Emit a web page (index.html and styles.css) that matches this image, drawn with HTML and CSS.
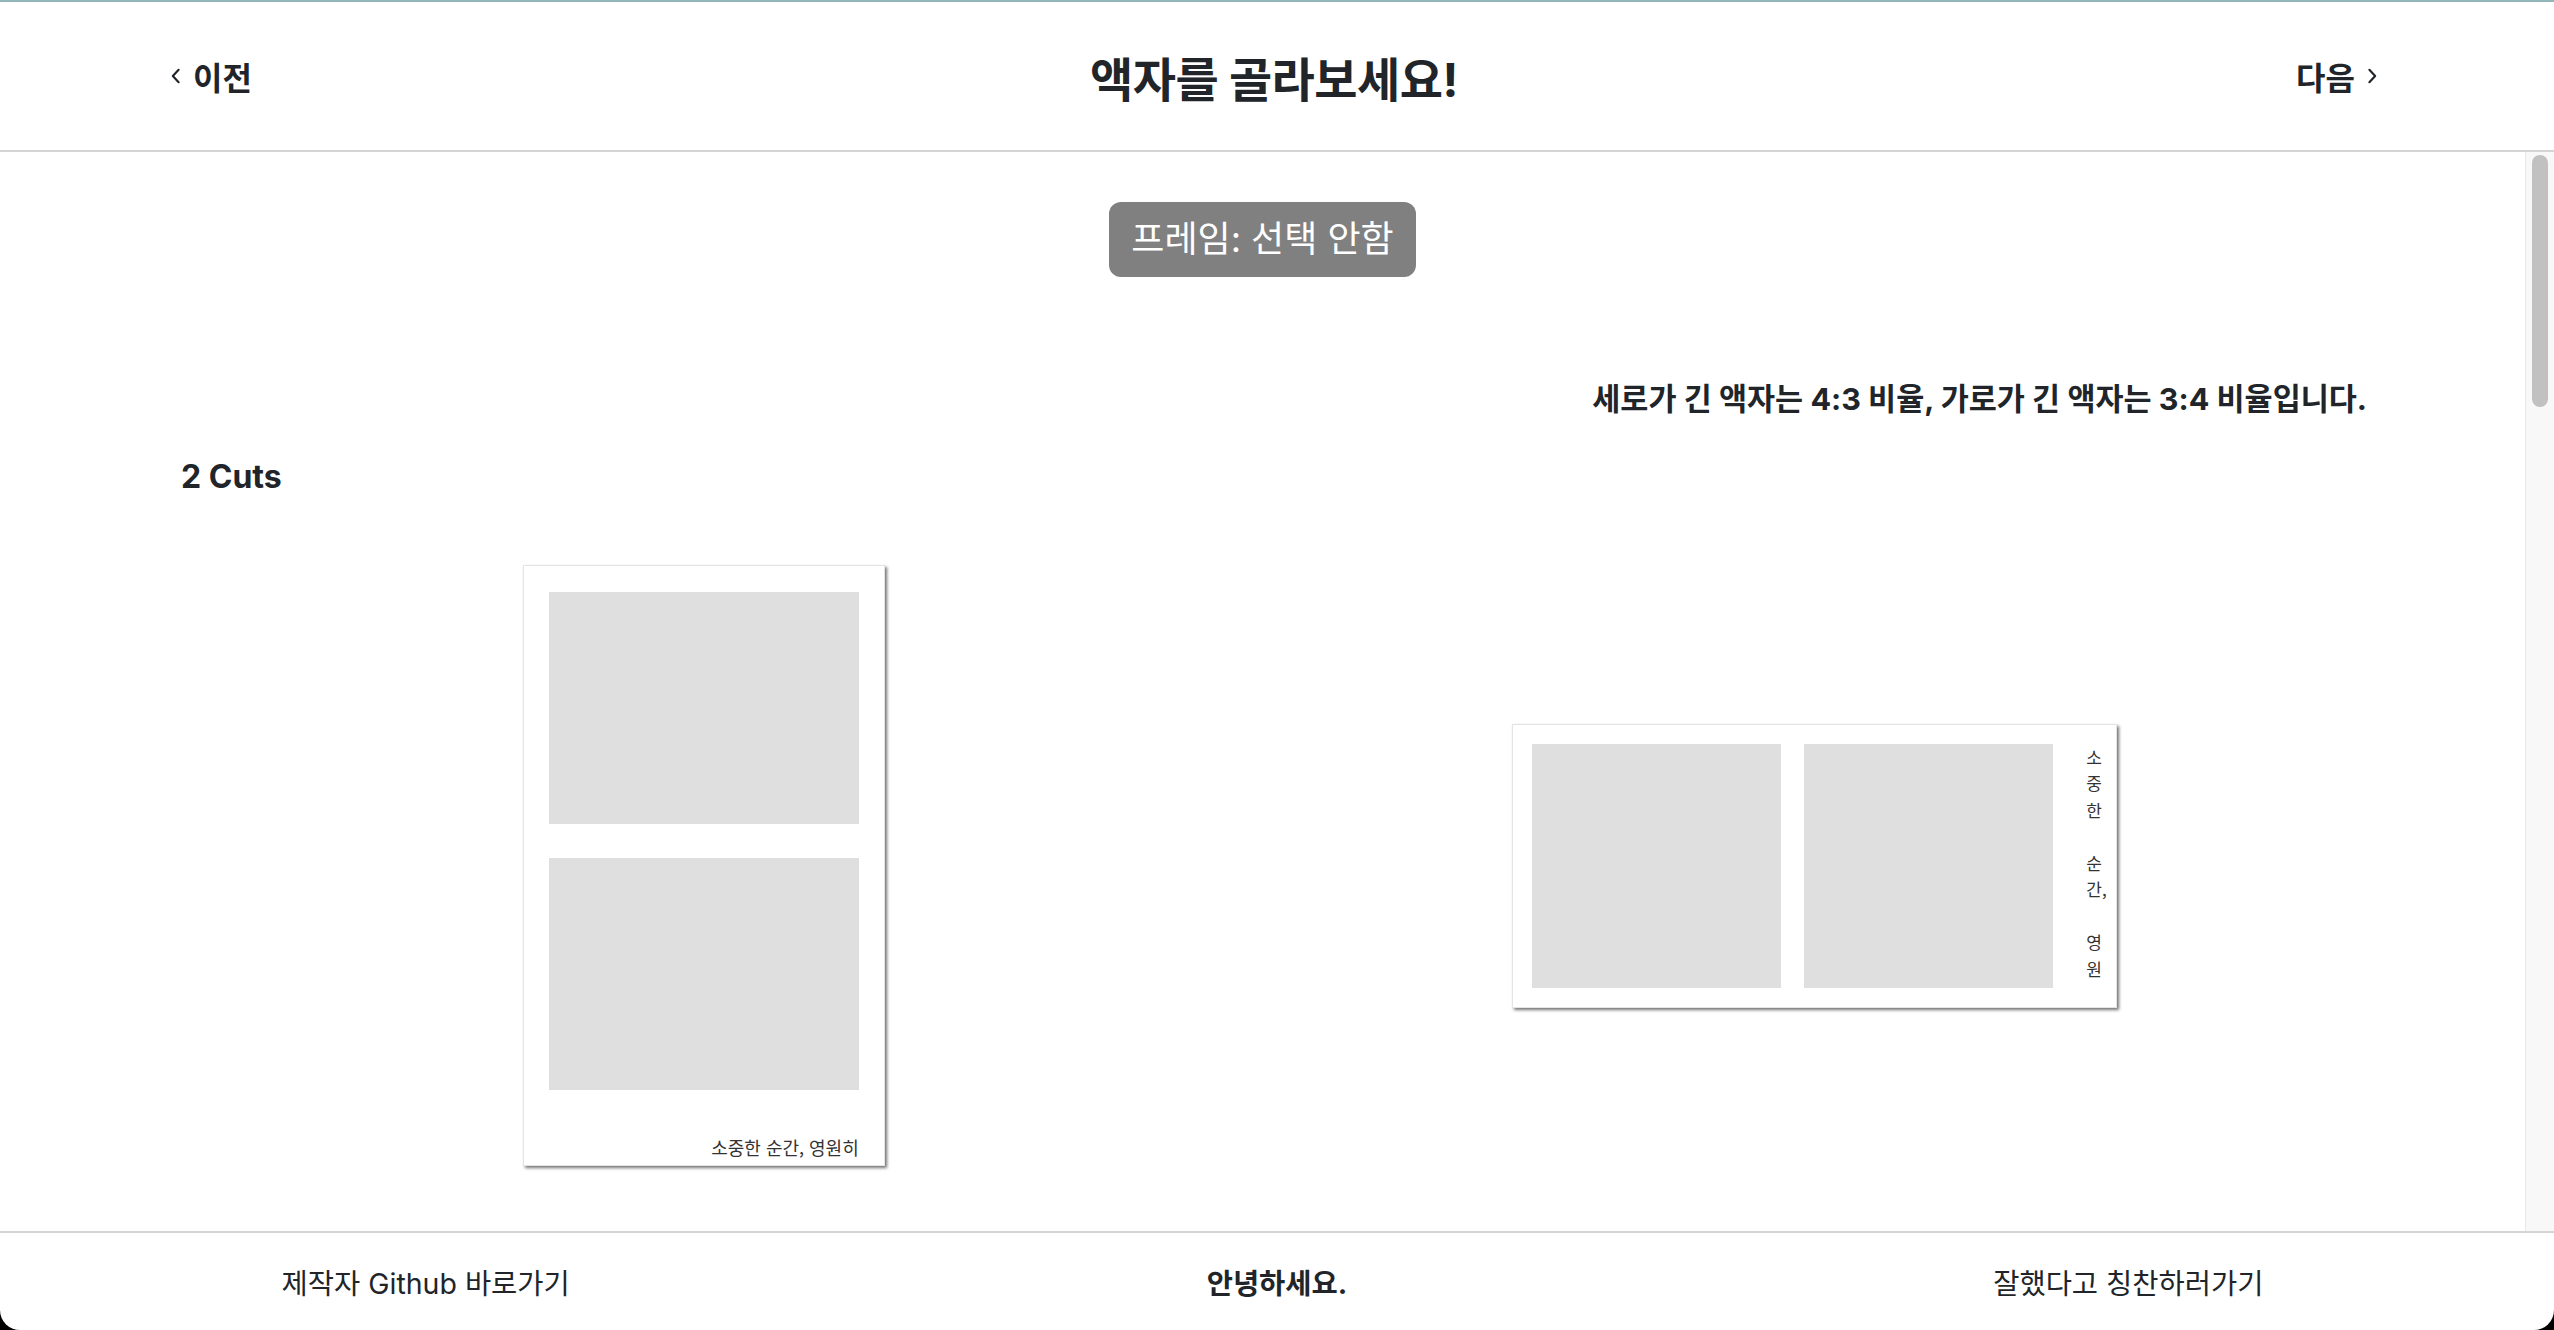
FILE: index.html
```html
<!DOCTYPE html>
<html lang="ko">
<head>
  <meta charset="UTF-8" />
  <meta name="viewport" content="width=device-width, initial-scale=1.0" />
  <title>액자 선택</title>
  <link rel="stylesheet" href="styles.css">
</head>
<body>
  <div class="window">
    <header class="topbar">
      <a class="nav prev" href="#">
        <svg viewBox="0 0 12 18" width="11" height="16"><path d="M9.5 2 L3 9 L9.5 16" /></svg>
        이전
      </a>
      <h1 class="title">액자를 골라보세요!</h1>
      <a class="nav next" href="#">
        다음
        <svg viewBox="0 0 12 18" width="11" height="16"><path d="M2.5 2 L9 9 L2.5 16" /></svg>
      </a>
    </header>

    <div class="body-area">
      <main class="content">
        <div class="badge-row"><span class="badge">프레임: 선택 안함</span></div>
        <p class="note">세로가 긴 액자는 4:3 비율, 가로가 긴 액자는 3:4 비율입니다.</p>

        <section class="cuts">
          <h2>2 Cuts</h2>
          <div class="frame-row">
            <div class="frame portrait">
              <div class="photo"></div>
              <div class="photo"></div>
              <p class="caption">소중한 순간, 영원히</p>
            </div>
            <div class="frame landscape">
              <div class="photo"></div>
              <div class="photo"></div>
              <p class="caption side">소중한 순간, 영원히</p>
            </div>
          </div>
        </section>
      </main>
      <div class="scrollbar"><div class="thumb"></div></div>
    </div>

    <footer class="bottombar">
      <a href="#">제작자 Github 바로가기</a>
      <strong>안녕하세요.</strong>
      <a href="#">잘했다고 칭찬하러가기</a>
    </footer>
  </div>
</body>
</html>
```

FILE: styles.css
```css
html, body {
  margin: 0;
  padding: 0;
  height: 100%;
}

html {
  background: #000;
}

body {
  font-family: Inter, "Noto Sans CJK KR", sans-serif;
  color: #212529;
}

.window {
  height: 100vh;
  box-sizing: border-box;
  display: flex;
  flex-direction: column;
  background: #fff;
  border-top: 2px solid #93b6ba;
  border-radius: 0 0 20px 20px;
  overflow: hidden;
}

/* 상단 바 */
.topbar {
  flex: 0 0 auto;
  height: 148px;
  display: grid;
  grid-template-columns: 1fr auto 1fr;
  align-items: center;
  padding: 0 176px 0 170px;
  border-bottom: 2px solid #d5d5d5;
}

.nav {
  display: flex;
  align-items: center;
  gap: 12px;
  font-size: 32px;
  font-weight: 700;
  color: #212529;
  text-decoration: none;
}

.nav svg {
  fill: none;
  stroke: #212529;
  stroke-width: 2.4;
  stroke-linecap: round;
  stroke-linejoin: round;
}

.nav.next {
  justify-self: end;
}

.title {
  margin: 0;
  font-size: 47px;
  font-weight: 700;
  letter-spacing: -0.5px;
}

/* 본문 */
.body-area {
  flex: 1;
  min-height: 0;
  display: flex;
}

.content {
  flex: 1;
  overflow: hidden;
  padding: 50px 158px 0;
}

.scrollbar {
  flex: 0 0 auto;
  width: 16px;
  padding: 3px 6px 0;
  background: #f8f8f8;
  border-left: 1px solid #e8e8e8;
}

.thumb {
  height: 252px;
  background: #c1c1c1;
  border-radius: 8px;
}

.badge-row {
  text-align: center;
}

.badge {
  display: inline-block;
  background: #808080;
  color: #fff;
  font-size: 36px;
  line-height: 51px;
  padding: 12px 22px;
  border-radius: 12px;
}

.note {
  margin: 102px 0 0;
  text-align: right;
  font-size: 30.5px;
  line-height: 40px;
  font-weight: 700;
}

.cuts h2 {
  margin: 38px 0 0 23px;
  font-size: 32px;
  line-height: 40px;
  font-weight: 700;
}

.frame-row {
  margin-top: 68px;
  display: grid;
  grid-template-columns: 1fr 1fr;
  align-items: center;
  justify-items: center;
}

.frame {
  box-sizing: border-box;
  background: #fff;
  border: 1px solid #e4e4e4;
  box-shadow: 2px 2px 3px rgba(0, 0, 0, 0.55);
}

.photo {
  background: #dfdfdf;
}

.caption {
  margin: 0;
  font-family: "Noto Sans CJK KR", sans-serif;
  font-size: 18px;
  color: #333;
}

/* 세로 액자 */
.frame.portrait {
  width: 362px;
  margin-right: 13px;
  padding: 26px 25px 5px;
  display: flex;
  flex-direction: column;
  gap: 34px;
}

.frame.portrait .photo {
  height: 232px;
}

.frame.portrait .caption {
  margin-top: 10px;
  line-height: 26px;
  text-align: right;
}

/* 가로 액자 */
.frame.landscape {
  display: flex;
  align-items: flex-start;
  padding: 19px 7px 19px 19px;
  gap: 23px;
}

.frame.landscape .photo {
  width: 249px;
  height: 244px;
}

.caption.side {
  width: 23px;
  height: 237px;
  margin-left: 10px;
  overflow: hidden;
  font-size: 17px;
  line-height: 26.5px;
  word-spacing: 10px;
  white-space: break-spaces;
  line-break: anywhere;
}

/* 하단 바 */
.bottombar {
  flex: 0 0 97px;
  display: grid;
  grid-template-columns: 1fr 1fr 1fr;
  align-items: center;
  justify-items: center;
  border-top: 2px solid #d5d5d5;
  font-size: 28.5px;
}

.bottombar a {
  color: #212529;
  text-decoration: none;
}

.bottombar strong {
  font-weight: 700;
}
```
